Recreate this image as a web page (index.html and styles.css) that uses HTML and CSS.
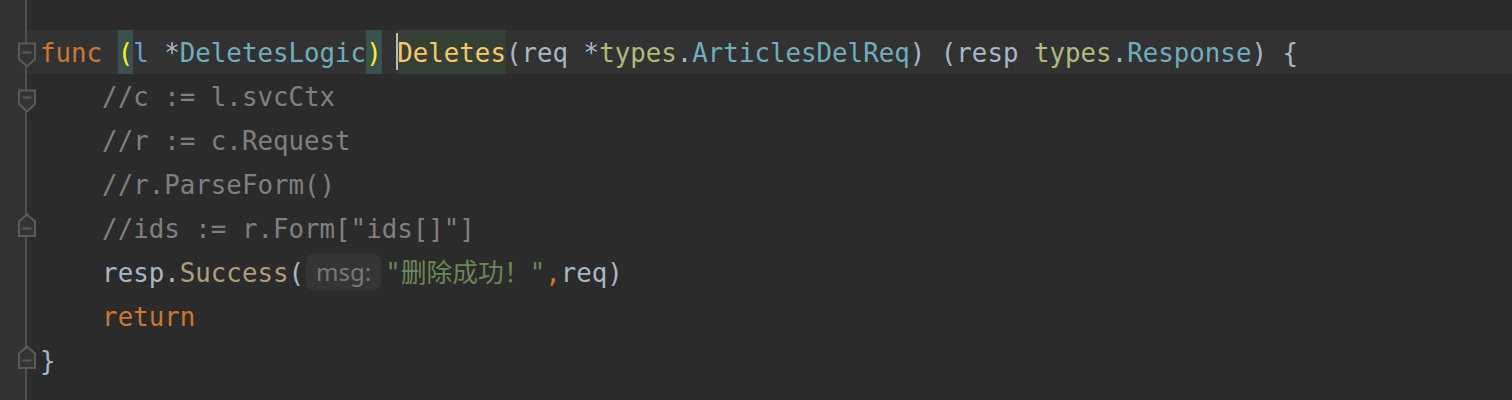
FILE: index.html
```html
<!DOCTYPE html>
<html lang="zh">
<head>
<meta charset="utf-8">
<link rel="stylesheet" href="styles.css">
</head>
<body>
<div class="editor">
  <div class="gutter">
    <div class="g-line">
      <svg class="fold fold-start" width="20" height="26" viewBox="0 0 20 26"><path d="M2 1.5H18V17L10 24.5L2 17Z" /><line x1="5.5" y1="10.5" x2="14.5" y2="10.5" /></svg>
    </div>
    <div class="g-line">
      <svg class="fold fold-start2" width="20" height="26" viewBox="0 0 20 26"><path d="M2 1.5H18V15L10 22.5L2 15Z" /><line x1="5.5" y1="8.5" x2="14.5" y2="8.5" /></svg>
    </div>
    <div class="g-line"></div>
    <div class="g-line"></div>
    <div class="g-line">
      <svg class="fold fold-end" width="20" height="26" viewBox="0 0 20 26"><path d="M2 8.5L10 1.5L18 8.5V23H2Z" /><line x1="5.5" y1="15.5" x2="14.5" y2="15.5" /></svg>
    </div>
    <div class="g-line"></div>
    <div class="g-line"></div>
    <div class="g-line">
      <svg class="fold fold-end" width="20" height="26" viewBox="0 0 20 26"><path d="M2 8.5L10 1.5L18 8.5V23H2Z" /><line x1="5.5" y1="15.5" x2="14.5" y2="15.5" /></svg>
    </div>
  </div>
  <div class="code">
    <div class="line current"><span class="kw">func</span> <span class="brace">(</span><span class="recv">l</span> <span class="op">*</span><span class="type">DeletesLogic</span><span class="brace">)</span> <span class="fn caret-here">Deletes</span><span class="op">(req *</span><span class="pkg">types</span><span class="op">.</span><span class="type">ArticlesDelReq</span><span class="op">) (resp </span><span class="pkg">types</span><span class="op">.</span><span class="type">Response</span><span class="op">) {</span></div>
    <div class="line"><span class="cm">    //c := l.svcCtx</span></div>
    <div class="line"><span class="cm">    //r := c.Request</span></div>
    <div class="line"><span class="cm">    //r.ParseForm()</span></div>
    <div class="line"><span class="cm">    //ids := r.Form["ids[]"]</span></div>
    <div class="line"><span class="op">    resp.</span><span class="call">Success</span><span class="op">(</span><span class="hint">msg:</span><span class="str">"删除成功！"</span><span class="kw">,</span><span class="op">req)</span></div>
    <div class="line"><span class="kw">    return</span></div>
    <div class="line"><span class="op">}</span></div>
  </div>
</div>
</body>
</html>
```

FILE: styles.css
```css
html, body {
  margin: 0;
  padding: 0;
  background: #2b2b2b;
}

.editor {
  display: flex;
  min-height: 400px;
  background: #2b2b2b;
}

.gutter {
  width: 25px;
  flex: none;
  background: #313335;
  border-right: 2px solid #4f4f4f;
  padding-top: 30px;
}

.g-line {
  height: 44px;
  position: relative;
}

.fold {
  position: absolute;
  left: 17px;
  z-index: 2;
}

.fold path {
  fill: #323436;
  stroke: #5a5a5a;
  stroke-width: 2;
  stroke-linejoin: miter;
}

.fold line {
  stroke: #5a5a5a;
  stroke-width: 2;
}

.fold-start { top: 12px; }
.fold-start2 { top: 15px; }
.fold-end { top: 7px; }

.code {
  flex: 1;
  padding-top: 30px;
  font-family: "DejaVu Sans Mono", "Noto Sans CJK SC", monospace;
  font-size: 25.8px;
  color: #a9b7c6;
}

.line {
  height: 44px;
  line-height: 47px;
  white-space: pre;
  padding-left: 13px;
}

.line.current {
  background: #323232;
}

.kw { color: #cc7832; }
.op { color: #a9b7c6; }
.recv { color: #5ea4da; }
.type { color: #6fafbd; }
.pkg { color: #b3bb79; }
.cm { color: #808080; }
.call { color: #b09d79; }
.str { color: #6a8759; }

.brace {
  display: inline-block;
  height: 44px;
  line-height: 47px;
  vertical-align: top;
  background: #3b514d;
  color: #ffef28;
}

.fn {
  display: inline-block;
  height: 44px;
  line-height: 47px;
  vertical-align: top;
  background: #344134;
  color: #ffc66d;
  position: relative;
}

.caret-here::before {
  content: "";
  position: absolute;
  left: -1px;
  top: 3px;
  width: 2px;
  height: 37px;
  background: #bbbbbb;
}

.hint {
  display: inline-block;
  height: 36px;
  line-height: 36px;
  vertical-align: middle;
  margin: 0 4px 0 2px;
  padding: 0 10px;
  border-radius: 7px;
  background: #353535;
  color: #787878;
  font-family: "Noto Sans", sans-serif;
  font-size: 24px;
  position: relative;
  top: -3px;
}
```
